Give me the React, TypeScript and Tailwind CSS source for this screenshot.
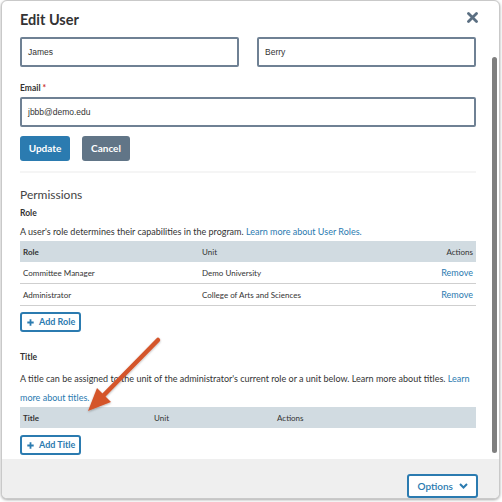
import * as React from "react";

const rolesData = [
  { role: "Committee Manager", unit: "Demo University" },
  { role: "Administrator", unit: "College of Arts and Sciences" },
];

const PlusIcon = () => (
  <svg width="7" height="7" viewBox="0 0 7 7" className="mr-[5px]">
    <path d="M3.5 0.3v6.4M0.3 3.5h6.4" stroke="#2b7bb0" strokeWidth="1.8" />
  </svg>
);

const OutlineButton = ({ label }: { label: string }) => (
  <button className="flex h-[20px] items-center rounded-[3px] border-2 border-[#2b7bb0] bg-white pl-[5px] pr-[4px] text-[9px] font-bold text-[#2b7bb0]">
    <PlusIcon />
    {label}
  </button>
);

const Arrow = () => (
  <svg
    className="pointer-events-none absolute left-0 top-0"
    width="502"
    height="502"
    viewBox="0 0 502 502"
  >
    <defs>
      <filter id="sh" x="-20%" y="-20%" width="140%" height="140%">
        <feDropShadow dx="0" dy="1" stdDeviation="1.2" floodColor="#000" floodOpacity="0.3" />
      </filter>
    </defs>
    <g filter="url(#sh)">
      <line x1="158" y1="340" x2="102" y2="397" stroke="#d4552c" strokeWidth="4.5" strokeLinecap="round" />
      <polygon points="88,411 111,402 97,388" fill="#d4552c" />
    </g>
  </svg>
);

export default function App() {
  return (
    <div className="relative h-[502px] w-[502px] overflow-hidden bg-white pl-px font-['Lato',sans-serif] text-[#333]">
      <div className="flex h-[499px] w-[499px] flex-col overflow-hidden rounded-[6px] border border-[#c9c9c9] bg-white shadow-[0_1px_3px_rgba(0,0,0,0.35)]">
        <div className="flex min-h-0 flex-1">
          <div className="w-[474px] pl-[18px]">
            <div className="flex h-[36px] items-start justify-between pt-[10px]">
              <h1 className="text-[14.5px] font-bold leading-[18px] text-[#333]">Edit User</h1>
              <svg width="11" height="11" viewBox="0 0 11 11" className="mr-[-2px] mt-[1px]">
                <path d="M1.5 1.5l8 8M9.5 1.5l-8 8" stroke="#5b6f82" strokeWidth="2.8" strokeLinecap="round" />
              </svg>
            </div>
            <div className="w-[456px]">
              <div className="flex gap-[18px]">
                <div className="flex h-[30px] flex-1 items-center rounded-[2px] border-2 border-[#6f8194] px-[6px] font-['Liberation_Sans',sans-serif] text-[8.5px]">
                  James
                </div>
                <div className="flex h-[30px] flex-1 items-center rounded-[2px] border-2 border-[#6f8194] px-[6px] font-['Liberation_Sans',sans-serif] text-[8.5px]">
                  Berry
                </div>
              </div>
              <div className="mt-[13px] text-[8.5px] font-bold leading-[17px]">
                Email <span className="text-[#c9302c]">*</span>
              </div>
              <div className="flex h-[30px] items-center rounded-[2px] border-2 border-[#6f8194] px-[6px] font-['Liberation_Sans',sans-serif] text-[8.5px]">
                jbbb@demo.edu
              </div>
              <div className="mt-[9px] flex gap-[12px]">
                <button className="h-[25px] w-[50px] rounded-[3px] bg-[#2b7bb0] text-[10px] font-bold text-white">
                  Update
                </button>
                <button className="h-[25px] w-[48px] rounded-[3px] bg-[#617587] text-[10px] font-bold text-white">
                  Cancel
                </button>
              </div>
              <div className="mt-[10px] h-[2px] bg-[#f5f5f5]" />

              <div className="mt-[14px] text-[12px] leading-[16px] text-[#444]">Permissions</div>
              <div className="mt-[3px] text-[8.5px] font-bold leading-[14px]">Role</div>
              <div className="mt-[6px] text-[9px] leading-[12px]">
                A user's role determines their capabilities in the program.{" "}
                <span className="text-[#2a7ab0]">Learn more about User Roles.</span>
              </div>
              <div className="mt-[3px] text-[8px]">
                <div className="grid h-[21px] grid-cols-[179px_1fr_80px] items-center bg-[#d1dbe1] px-[3px] font-bold">
                  <span>Role</span>
                  <span className="font-normal">Unit</span>
                  <span className="text-right font-normal">Actions</span>
                </div>
                {rolesData.map((r) => (
                  <div
                    key={r.role}
                    className="grid h-[22px] grid-cols-[179px_1fr_80px] items-center border-b border-[#cfcfcf] px-[3px]"
                  >
                    <span>{r.role}</span>
                    <span>{r.unit}</span>
                    <span className="text-right text-[9px] text-[#2a7ab0]">Remove</span>
                  </div>
                ))}
              </div>
              <div className="mt-[6px] flex">
                <OutlineButton label="Add Role" />
              </div>

              <div className="mt-[18px] text-[8.5px] font-bold leading-[14px]">Title</div>
              <div className="mt-[5px] text-[9px] leading-[19px]">
                <div className="whitespace-nowrap">
                  A title can be assigned to the unit of the administrator's current role or a unit below. Learn more about titles.{" "}
                  <span className="text-[#2a7ab0]">Learn</span>
                </div>
                <div className="text-[#2a7ab0]">more about titles.</div>
              </div>
              <div className="grid h-[21px] grid-cols-[131px_123px_1fr] items-center bg-[#d1dbe1] px-[3px] text-[8px]">
                <span className="font-bold">Title</span>
                <span>Unit</span>
                <span>Actions</span>
              </div>
              <div className="mt-[7px] flex">
                <OutlineButton label="Add Title" />
              </div>
            </div>
          </div>
          <div className="flex w-[23px] justify-end pt-[56px] pb-[6px] pr-[2px]">
            <div className="w-[5px] rounded-full bg-[#7f7f7f]" />
          </div>
        </div>
        <div className="flex h-[39px] justify-end bg-[#efefef] pr-[21px] pt-[15px]">
          <button className="flex h-[24px] items-center gap-[6px] rounded-[3px] border-2 border-[#2b7bb0] bg-white px-[8px] text-[10px] font-semibold text-[#2b7bb0]">
            Options
            <svg width="9" height="6" viewBox="0 0 9 6">
              <path d="M1 1l3.5 3.5L8 1" stroke="#2b7bb0" strokeWidth="2" fill="none" />
            </svg>
          </button>
        </div>
      </div>
      <Arrow />
    </div>
  );
}
